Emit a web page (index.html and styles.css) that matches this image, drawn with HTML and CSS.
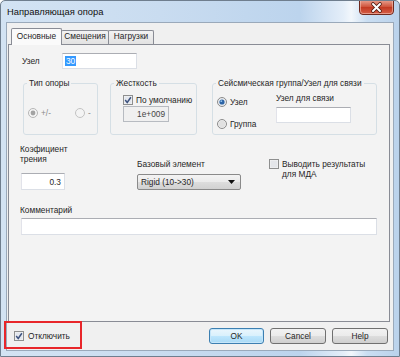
FILE: index.html
```html
<!DOCTYPE html>
<html lang="ru">
<head>
    <meta charset="UTF-8">
    <title>Направляющая опора</title>
    <link rel="stylesheet" href="styles.css">
</head>
<body>
    <div class="window">
        <div class="titlebar">
            <span class="title">Направляющая опора</span>
            <div class="close">
                <svg width="35" height="15" viewBox="0 0 35 15">
                    <defs>
                        <linearGradient id="closeBg" x1="0" y1="0" x2="0" y2="1">
                            <stop offset="0" stop-color="#e9a493"/>
                            <stop offset="0.45" stop-color="#d0573f"/>
                            <stop offset="0.5" stop-color="#c23a22"/>
                            <stop offset="1" stop-color="#d7614a"/>
                        </linearGradient>
                    </defs>
                    <path d="M0.5 0 V11 Q0.5 14.5 4 14.5 H31 Q34.5 14.5 34.5 11 V0" fill="url(#closeBg)" stroke="#6e2a1f"/>
                    <path d="M1.5 0 V11 Q1.5 13.5 4 13.5 H31 Q33.5 13.5 33.5 11 V0" fill="none" stroke="#f3c3b6" stroke-width="0.6"/>
                    <path d="M14 4 L21 11 M21 4 L14 11" stroke="#4a1a12" stroke-width="3.6" stroke-linecap="round"/>
                    <path d="M14 4 L21 11 M21 4 L14 11" stroke="#ffffff" stroke-width="2" stroke-linecap="round"/>
                </svg>
            </div>
        </div>

        <div class="client">
            <div class="tabs">
                <div class="tab active">Основные</div>
                <div class="tab tab-shift">Смещения</div>
                <div class="tab tab-load">Нагрузки</div>
            </div>

            <div class="panel">
                <div class="node-row">
                    <span class="node-label">Узел</span>
                    <div class="textbox node-input"><span class="selected">30</span></div>
                </div>

                <div class="groups">
                    <fieldset class="group group-type">
                        <legend>Тип опоры</legend>
                        <div class="type-row">
                            <span class="opt disabled">
                                <svg width="10" height="10" viewBox="0 0 10 10"><circle cx="5" cy="5" r="4.5" fill="#f4f4f4" stroke="#b5b5b5"/><circle cx="5" cy="5" r="2.4" fill="#a3a3a3"/></svg>
                                +/-
                            </span>
                            <span class="opt disabled">
                                <svg width="10" height="10" viewBox="0 0 10 10"><circle cx="5" cy="5" r="4.5" fill="#f4f4f4" stroke="#c2c2c2"/></svg>
                                -
                            </span>
                        </div>
                    </fieldset>

                    <fieldset class="group group-stiff">
                        <legend>Жесткость</legend>
                        <div class="stiff-body">
                            <div class="opt">
                                <svg width="10" height="10" viewBox="0 0 10 10"><rect x="0.5" y="0.5" width="9" height="9" fill="#f5f5f5" stroke="#8e8f8f"/><rect x="1.5" y="1.5" width="7" height="7" fill="#e3e7ee"/><path d="M2.2 5 L4.2 7.4 L7.9 2.2" fill="none" stroke="#3f5480" stroke-width="1.5"/></svg>
                                По умолчанию
                            </div>
                            <div class="textbox stiff-input">1e+009</div>
                        </div>
                    </fieldset>

                    <fieldset class="group group-seismic">
                        <legend>Сейсмическая группа/Узел для связи</legend>
                        <div class="seismic-body">
                            <div class="seismic-radios">
                                <span class="opt">
                                    <svg width="10" height="10" viewBox="0 0 10 10"><circle cx="5" cy="5" r="4.5" fill="#e9ecef" stroke="#8b8b8b"/><circle cx="5" cy="5" r="2.6" fill="#2c64a6"/><circle cx="4.3" cy="4.2" r="0.9" fill="#8fc0ec"/></svg>
                                    Узел
                                </span>
                                <span class="opt">
                                    <svg width="10" height="10" viewBox="0 0 10 10"><circle cx="5" cy="5" r="4.5" fill="#eeeeee" stroke="#8b8b8b"/><circle cx="5" cy="5" r="3.2" fill="#e1e1e1"/></svg>
                                    Группа
                                </span>
                            </div>
                            <div class="seismic-link">
                                <span>Узел для связи</span>
                                <div class="textbox link-input"></div>
                            </div>
                        </div>
                    </fieldset>
                </div>

                <div class="params">
                    <div class="param-friction">
                        <span>Коэфициент<br>трения</span>
                        <div class="textbox friction-input">0.3</div>
                    </div>
                    <div class="param-base">
                        <span>Базовый элемент</span>
                        <div class="combo">
                            <span>Rigid (10-&gt;30)</span>
                            <svg width="7" height="4" viewBox="0 0 7 4"><path d="M0 0 H7 L3.5 4 Z" fill="#111"/></svg>
                        </div>
                    </div>
                    <div class="param-mda">
                        <svg width="10" height="10" viewBox="0 0 10 10"><rect x="0.5" y="0.5" width="9" height="9" fill="#f5f5f5" stroke="#8e8f8f"/><rect x="1.5" y="1.5" width="7" height="7" fill="#e4e6ea"/></svg>
                        <span>Выводить результаты<br>для МДА</span>
                    </div>
                </div>

                <div class="comment">
                    <span>Комментарий</span>
                    <div class="textbox comment-input"></div>
                </div>
            </div>

            <div class="footer">
                <div class="opt off-check">
                    <svg width="10" height="10" viewBox="0 0 10 10"><rect x="0.5" y="0.5" width="9" height="9" fill="#f5f5f5" stroke="#8e8f8f"/><rect x="1.5" y="1.5" width="7" height="7" fill="#e3e7ee"/><path d="M2.2 5 L4.2 7.4 L7.9 2.2" fill="none" stroke="#3f5480" stroke-width="1.5"/></svg>
                    Отключить
                </div>
                <div class="buttons">
                    <div class="btn default">OK</div>
                    <div class="btn">Cancel</div>
                    <div class="btn">Help</div>
                </div>
            </div>
        </div>

        <div class="marker"></div>
    </div>
</body>
</html>
```

FILE: styles.css
```css
body {
    margin: 0;
    font-family: "Liberation Sans", Arial, sans-serif;
    font-size: 8.3px;
    line-height: 10px;
    color: #262626;
    background: #ffffff;
}
.window {
    position: relative;
    width: 400px;
    height: 357px;
    box-sizing: border-box;
    border: 1px solid #6f7e8e;
    border-radius: 5px 5px 0 0;
    background: linear-gradient(90deg, #d3e3f3 0%, #c9dcf0 40%, #bcd4ed 75%, #e4eef9 86%, #f2f7fc 88%, #cadef2 92%, #bad2eb 100%);
    overflow: hidden;
}
.titlebar {
    height: 21px;
    display: flex;
    justify-content: space-between;
    align-items: flex-start;
    padding-left: 6px;
    padding-right: 5px;
}
.title {
    font-size: 9.4px;
    line-height: 12px;
    margin-top: 5px;
    color: #111;
}
.close {
    height: 15px;
    margin-top: -1px;
}
.close svg {
    display: block;
}
.client {
    margin: 0 5px;
    height: 329px;
    box-sizing: border-box;
    border: 1px solid #9aa9ba;
    background: #f0f0f0;
}

/* tabs */
.tabs {
    display: flex;
    align-items: flex-end;
    height: 16px;
    margin-top: 5px;
    padding-left: 4px;
    position: relative;
    z-index: 1;
}
.tab {
    height: 14px;
    box-sizing: border-box;
    border: 1px solid #898c95;
    border-bottom: none;
    border-radius: 2px 2px 0 0;
    margin-left: -1px;
    background: linear-gradient(#f3f3f3, #e2e2e2);
    text-align: center;
}
.tab.active {
    width: 51px;
    height: 17px;
    margin-left: 0;
    margin-bottom: -1px;
    padding-top: 2px;
    background: #fafafa;
    position: relative;
    z-index: 2;
}
.tab-shift {
    width: 48px;
}
.tab-load {
    width: 46px;
}
.panel {
    margin-left: 1px;
    width: 382px;
    height: 278px;
    box-sizing: border-box;
    border: 1px solid #898c95;
    background: #f3f3f3;
    padding-top: 8px;
}

/* inputs */
.textbox {
    box-sizing: border-box;
    background: #ffffff;
    border: 1px solid #dbdfe6;
    border-top-color: #abadb3;
    border-left-color: #e2e3ea;
}
.node-row {
    display: flex;
    align-items: center;
    height: 16px;
    padding-left: 13px;
}
.node-label {
    width: 40px;
}
.node-input {
    width: 75px;
    height: 16px;
    padding: 2px 0 0 2px;
}
.selected {
    background: #3399ff;
    color: #ffffff;
    padding: 0 1px;
}

/* group boxes */
.groups {
    display: flex;
    margin-top: 9px;
    padding-left: 14px;
}
.group {
    margin: 0;
    padding: 0;
    height: 57px;
    box-sizing: border-box;
    border: 1px solid #d5dfe5;
    border-radius: 3px;
    min-width: 0;
}
.group legend {
    margin-left: 3px;
    padding: 0 2px;
    line-height: 10px;
}
.group-type {
    width: 75px;
}
.group-stiff {
    width: 87px;
    margin-left: 12px;
}
.stiff-body {
    padding: 7px 0 0 12px;
}
.group-seismic {
    width: 165px;
    margin-left: 15px;
}
.opt {
    display: flex;
    align-items: center;
    gap: 3px;
    height: 10px;
}
.opt svg {
    flex: none;
}
.disabled {
    color: #8a8a8a;
}
.type-row {
    display: flex;
    gap: 24px;
    padding: 20px 0 0 4px;
}
.stiff-input {
    margin-top: 1px;
    width: 46px;
    height: 16px;
    background: #f0f0f0;
    border-color: #b7bbc1;
    color: #444;
    text-align: right;
    padding: 2px 3px 0 0;
}
.seismic-body {
    display: flex;
    padding: 5px 0 0 4px;
}
.seismic-radios {
    display: flex;
    flex-direction: column;
    gap: 12px;
    margin-top: 4px;
    width: 59px;
}
.seismic-link .link-input {
    margin-top: 4px;
    width: 75px;
    height: 16px;
}

/* lower rows */
.params {
    display: flex;
    align-items: flex-end;
    margin-top: 9px;
    padding-left: 11px;
}
.param-friction {
    width: 117px;
}
.friction-input {
    margin: 9px 0 0 1px;
    width: 44px;
    height: 17px;
    text-align: right;
    padding: 3px 3px 0 0;
}
.param-base {
    width: 132px;
}
.combo {
    margin-top: 5px;
    width: 104px;
    height: 16px;
    box-sizing: border-box;
    border: 1px solid #8a8a8a;
    border-radius: 2px;
    background: linear-gradient(#f3f3f3 0%, #ebebeb 50%, #dddddd 51%, #d1d1d1 100%);
    display: flex;
    align-items: center;
    justify-content: space-between;
    padding: 0 5px 0 3px;
}
.param-mda {
    align-self: flex-start;
    margin-top: 15px;
    display: flex;
    gap: 3px;
}
.comment {
    margin-top: 15px;
    padding-left: 11px;
}
.comment-input {
    margin: 3px 0 0 1px;
    width: 356px;
    height: 17px;
}

/* footer */
.footer {
    height: 28px;
    display: flex;
    align-items: center;
    justify-content: space-between;
    padding: 0 5px 0 7px;
}
.off-check {
    gap: 4px;
}
.buttons {
    display: flex;
    gap: 6px;
}
.btn {
    width: 56px;
    height: 16px;
    box-sizing: border-box;
    border: 1px solid #707070;
    border-radius: 3px;
    background: linear-gradient(#f2f2f2 0%, #ebebeb 50%, #dddddd 51%, #cfcfcf 100%);
    text-align: center;
    line-height: 14px;
}
.btn.default {
    width: 55px;
    border-color: #3c7fb1;
    background: linear-gradient(#eaf6fd 0%, #d9f0fc 50%, #bee6fd 51%, #a7d9f5 100%);
    box-shadow: inset 0 0 0 1px #c5e6fa;
}
.marker {
    position: absolute;
    left: 3px;
    top: 320px;
    width: 78px;
    height: 28px;
    box-sizing: border-box;
    border: 2px solid #e8262a;
}
```
